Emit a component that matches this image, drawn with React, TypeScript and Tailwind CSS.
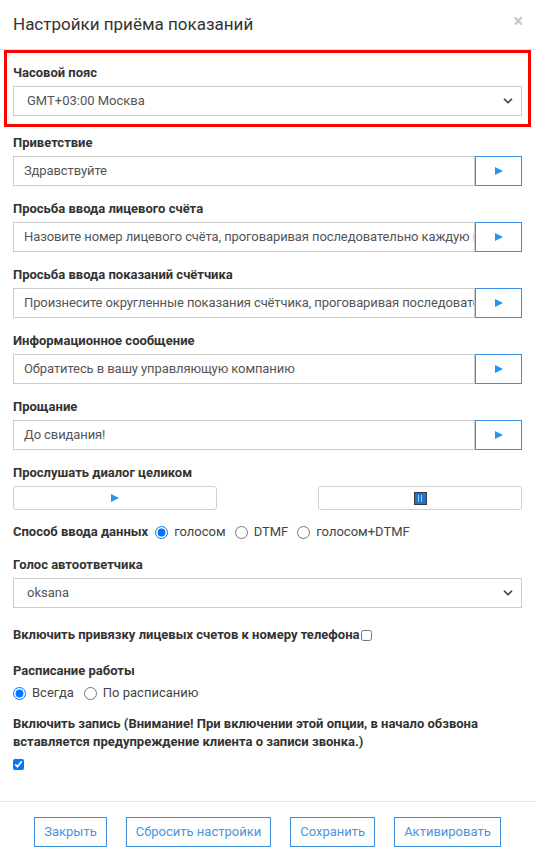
import { ChevronDown } from "lucide-react";

const font = { fontFamily: "Roboto, 'Noto Sans', sans-serif" };

type PromptField = { label: string; value: string };

const prompts: PromptField[] = [
  { label: "Приветствие", value: "Здравствуйте" },
  {
    label: "Просьба ввода лицевого счёта",
    value: "Назовите номер лицевого счёта, проговаривая последовательно каждую цифру",
  },
  {
    label: "Просьба ввода показаний счётчика",
    value: "Произнесите округленные показания счётчика, проговаривая последовательно каждую цифру",
  },
  { label: "Информационное сообщение", value: "Обратитесь в вашу управляющую компанию" },
  { label: "Прощание", value: "До свидания!" },
];

function Label({ children }: { children: React.ReactNode }) {
  return <div className="mb-[4px] text-[13px] font-bold leading-[18px] text-[#333]">{children}</div>;
}

function PlayGlyph() {
  return (
    <svg width="10" height="10" viewBox="0 0 10 10" className="block">
      <path d="M1 1 L9 5 L1 9 Z" fill="#2196f3" />
    </svg>
  );
}

function Select({ value }: { value: string }) {
  return (
    <div className="flex h-[30px] items-center justify-between border border-[#ccc] bg-white pl-[13px] pr-[6px] text-[13px] text-[#555]">
      <span>{value}</span>
      <ChevronDown size={14} strokeWidth={3} className="text-[#444]" />
    </div>
  );
}

export default function App() {
  return (
    <div className="min-h-[855px] w-[535px] bg-white" style={font}>
      <div className="flex h-[50px] items-center justify-between border-b border-[#e5e5e5] pl-[13px] pr-[12px]">
        <h1 className="text-[17px] font-normal text-[#333]">Настройки приёма показаний</h1>
        <span className="-mt-[8px] text-[18px] font-bold leading-none text-[#c8c8c8]">×</span>
      </div>

      <div className="px-[13px] pb-[31px]">
        <div className="mx-[-9px] border-[3px] border-[#f00] px-[6px] pb-[8px] pt-[11px]">
          <Label>Часовой пояс</Label>
          <Select value="GMT+03:00 Москва" />
        </div>

        <div className="pt-[7px]">
          {prompts.map((p) => (
            <div key={p.label} className="mb-[14px]">
              <Label>{p.label}</Label>
              <div className="flex h-[30px]">
                <div className="flex min-w-0 flex-1 items-center overflow-hidden whitespace-nowrap border border-[#ccc] pl-[10px] text-[13px] tracking-[-0.1px] text-[#555]">
                  {p.value}
                </div>
                <button className="flex w-[47px] items-center justify-center border border-[#3a8ee6]">
                  <PlayGlyph />
                </button>
              </div>
            </div>
          ))}

          <div className="mb-[13px]">
            <Label>Прослушать диалог целиком</Label>
            <div className="flex h-[24px] justify-between">
              <button className="flex w-[204px] items-center justify-center rounded-[3px] border border-[#d0d0d0]">
                <PlayGlyph />
              </button>
              <button className="flex w-[204px] items-center justify-center rounded-[3px] border border-[#d0d0d0]">
                <span className="flex h-[13px] w-[13px] items-center justify-center gap-[2px] border border-[#3a3a3a] bg-[#1976d2]">
                  <span className="h-[7px] w-[1px] bg-[#a9cdf5]" />
                  <span className="h-[7px] w-[1px] bg-[#a9cdf5]" />
                </span>
              </button>
            </div>
          </div>

          <div className="mb-[15px] flex items-center text-[13px] leading-[18px]">
            <span className="mr-[7px] font-bold text-[#333]">Способ ввода данных</span>
            <label className="mr-[9px] flex items-center gap-[6px] text-[#444]">
              <input type="radio" name="mode" defaultChecked className="m-0 h-[13px] w-[13px]" />
              голосом
            </label>
            <label className="mr-[9px] flex items-center gap-[6px] text-[#444]">
              <input type="radio" name="mode" className="m-0 h-[13px] w-[13px]" />
              DTMF
            </label>
            <label className="flex items-center gap-[6px] text-[#444]">
              <input type="radio" name="mode" className="m-0 h-[13px] w-[13px]" />
              голосом+DTMF
            </label>
          </div>

          <div className="mb-[18px]">
            <Label>Голос автоответчика</Label>
            <Select value="oksana" />
          </div>

          <div className="mb-[18px] flex items-center text-[13px] font-bold leading-[18px] text-[#333]">
            Включить привязку лицевых счетов к номеру телефона
            <input type="checkbox" className="m-0 ml-[2px] h-[11px] w-[11px]" />
          </div>

          <div className="mb-[13px]">
            <Label>Расписание работы</Label>
            <div className="flex items-center text-[13px] leading-[18px] text-[#444]">
              <label className="mr-[10px] flex items-center gap-[6px]">
                <input type="radio" name="sched" defaultChecked className="m-0 h-[13px] w-[13px]" />
                Всегда
              </label>
              <label className="flex items-center gap-[6px]">
                <input type="radio" name="sched" className="m-0 h-[13px] w-[13px]" />
                По расписанию
              </label>
            </div>
          </div>

          <div className="text-[13px] font-bold leading-[18px] text-[#333]">
            Включить запись (Внимание! При включении этой опции, в начало обзвона вставляется
            предупреждение клиента о записи звонка.)
          </div>
          <input type="checkbox" defaultChecked className="m-0 mt-[8px] block h-[11px] w-[11px]" />
        </div>
      </div>

      <div className="flex justify-center gap-[19px] border-t border-[#e5e5e5] pb-[9px] pt-[15px]">
        {["Закрыть", "Сбросить настройки", "Сохранить", "Активировать"].map((b) => (
          <button
            key={b}
            className="h-[30px] border border-[#3d8fdc] px-[9px] text-[13px] text-[#4a94dc]"
          >
            {b}
          </button>
        ))}
      </div>
    </div>
  );
}
